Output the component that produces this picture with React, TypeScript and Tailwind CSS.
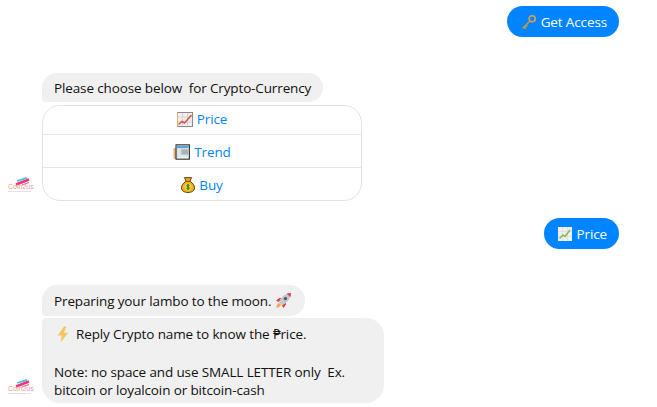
const font = "font-['Open_Sans','Noto_Sans',sans-serif]";

function KeyIcon() {
  return (
    <svg width="16" height="16" viewBox="0 0 16 16" className="shrink-0" fill="none">
      <circle cx="11.2" cy="4.800" r="3" stroke="#dca14a" strokeWidth="1.600" />
      <path d="M9 7 1.800 14.200M3 13l1.800 1.600M4.800 11.200l1.500 1.400" stroke="#d4983f" strokeWidth="1.500" />
    </svg>
  );
}

function ChartIcon() {
  return (
    <svg width="16" height="15" viewBox="0 0 16 15" className="shrink-0">
      <rect x="0.5" y="0.5" width="15" height="14" fill="#f1efef" stroke="#8c8888" />
      <path d="M5.500 1v13M10.500 1v13M1 5h14M1 10h14" stroke="#d4d2d2" strokeWidth="1" />
      <path d="M1.500 12.500 5 9.500l2.500 1.500 7-8" stroke="#e0523f" strokeWidth="1.500" fill="none" />
      <path d="M0.500 0.500v14" stroke="#e8b06a" />
    </svg>
  );
}

function GreenChartIcon() {
  return (
    <svg width="14" height="14" viewBox="0 0 14 14" className="shrink-0">
      <rect width="14" height="14" fill="#eef1f2" />
      <path d="M4.500 0v14M9.500 0v14M0 4.500h14M0 9.500h14" stroke="#dfe3e5" strokeWidth="1" />
      <path d="M1.500 11.500 5 8l2 1.500 5-6.500" stroke="#86b85a" strokeWidth="1.500" fill="none" />
    </svg>
  );
}

function NewsIcon() {
  return (
    <svg width="17" height="16" viewBox="0 0 17 16" className="shrink-0">
      <path d="M3 1h13.500v14H2A1.500 1.500 0 0 1 .5 13.500V4H3z" fill="#e9b36d" />
      <rect x="3" y="0.800" width="13.400" height="14.400" fill="#cfd6da" stroke="#26292c" strokeWidth="1" />
      <rect x="4" y="2" width="11.500" height="2" fill="#58a6dc" />
      <rect x="8.500" y="5.500" width="6.500" height="5" fill="#aab2b7" />
      <path d="M4.500 6h3M4.500 8h3M4.500 10h3M4.500 12h10.500M4.500 13.600h10.500" stroke="#f4f6f7" strokeWidth="1" />
    </svg>
  );
}

function BagIcon() {
  return (
    <svg width="14" height="16" viewBox="0 0 14 16" className="shrink-0">
      <path d="M3.500.7h7L9 4l.6.8C12 6.400 13.500 8.500 13.500 10.800c0 3-2.800 4.700-6.500 4.700S.5 13.800.5 10.800c0-2.300 1.500-4.400 3.900-6L5 4z" fill="#edb21d" stroke="#5a3a08" strokeWidth="1" />
      <path d="M4.500 4.300h5" stroke="#c2410c" strokeWidth="1.300" />
      <circle cx="7" cy="10" r="3.500" fill="#f6cf3d" />
      <path d="M8.500 8.400C7.500 7.700 5.800 8 5.800 9c0 1.300 2.700.8 2.700 2 0 1-1.800 1.200-3 .5M7 7v6" stroke="#187a2f" strokeWidth="1" fill="none" />
    </svg>
  );
}

function RocketIcon() {
  return (
    <svg width="17" height="17" viewBox="0 0 16 16" className="shrink-0">
      <path d="M4.500 5.500 1 8l2.500 1.500L6 6z" fill="#d9434e" />
      <path d="M10.500 11.500 8 15l-1.500-2.500L10 10z" fill="#d9434e" />
      <path d="M3.800 9.800C5.500 4.800 9.500 1.200 15 1c-.2 5.500-3.800 9.500-8.800 11.200z" fill="#c3c7cc" />
      <path d="M11 1.500 15 1c0 1.400-.2 2.700-.6 3.900z" fill="#d9434e" />
      <circle cx="9.800" cy="6.200" r="1.600" fill="#4d5761" />
      <path d="M3.800 10.300C2.300 11 1.400 12.800 1.200 14.800c2-.2 3.800-1.100 4.500-2.600z" fill="#f2a65a" />
    </svg>
  );
}

function BoltIcon() {
  return (
    <svg width="12" height="17" viewBox="0 0 12 17" className="ml-[3px] shrink-0">
      <path d="M7 .5.800 9.500h4L3.500 16.500 11.300 6.800H6.800L9.500.5z" fill="#f6c55f" />
    </svg>
  );
}

function Logo() {
  return (
    <div className="relative w-[26px] h-[15px] shrink-0">
      <svg width="26" height="10" viewBox="0 0 26 10" className="absolute left-0 top-0">
        <path d="M9 4 19 0.800" stroke="#45c1d6" strokeWidth="1.800" />
        <path d="M8 7.500 21 2.500" stroke="#f0337e" strokeWidth="2.500" />
        <path d="M14 8 21 5.500" stroke="#f26a3d" strokeWidth="1.200" />
      </svg>
      <span className="absolute left-0 top-[6px] text-[7px] leading-[8px] tracking-normal whitespace-nowrap font-['Liberation_Sans',sans-serif] text-[#f78fc4]">
        <span className="text-[#f5a07a]">Coin</span>2us
      </span>
      <div className="absolute left-0 top-[14px] w-[23px] h-px bg-[#e2e2e2]" />
    </div>
  );
}

function ButtonRow({ icon, label, className, divider }: { icon: React.ReactNode; label: string; className: string; divider: boolean }) {
  return (
    <div className={`flex items-center justify-center gap-[4px] text-[#0084ff] ${className} ${divider ? "border-t border-[#e6e6e6]" : ""}`}>
      {icon}
      <span>{label}</span>
    </div>
  );
}

function Outgoing({ icon, label, className }: { icon: React.ReactNode; label: string; className: string }) {
  return (
    <div className="flex justify-end pr-[38px]">
      <div className={`flex items-center h-[31px] rounded-full bg-[#0084ff] text-white ${className}`}>
        {icon}
        <span>{label}</span>
      </div>
    </div>
  );
}

export default function App() {
  return (
    <div className={`w-[657px] h-[407px] overflow-hidden bg-white pt-[6px] text-[13.5px] leading-[18px] tracking-[-0.13px] text-[#111] ${font}`}>
      <Outgoing icon={<KeyIcon />} label="Get Access" className="pl-[14px] pr-[12px] gap-[4px]" />

      <div className="mt-[36px] flex items-end gap-[8px] pl-[8px]">
        <div className="mb-[9px]">
          <Logo />
        </div>
        <div className="flex flex-col items-start">
          <div className="h-[29px] flex items-center px-[12px] bg-[#f0f0f0] rounded-t-[15px] rounded-br-[15px] rounded-bl-[4px] whitespace-pre">
            Please choose below  for Crypto-Currency
          </div>
          <div className="mt-[3px] w-[320px] border border-[#e3e3e3] rounded-[18px] overflow-hidden">
            <ButtonRow icon={<ChartIcon />} label="Price" className="h-[28px] pb-[2px]" divider={false} />
            <ButtonRow icon={<NewsIcon />} label="Trend" className="h-[33px] pt-[2px]" divider />
            <ButtonRow icon={<BagIcon />} label="Buy" className="h-[33px] pt-[2px]" divider />
          </div>
        </div>
      </div>

      <div className="mt-[17px]">
        <Outgoing icon={<GreenChartIcon />} label="Price" className="pl-[14px] pr-[12px] gap-[5px]" />
      </div>

      <div className="mt-[36px] flex items-end gap-[8px] pl-[8px]">
        <div className="mb-[9px]">
          <Logo />
        </div>
        <div className="flex flex-col items-start">
          <div className="h-[31px] flex items-center gap-[4px] pl-[12px] pr-[13px] bg-[#f0f0f0] rounded-t-[15px] rounded-br-[15px] rounded-bl-[4px] whitespace-pre">
            <span>Preparing your lambo to the moon.</span>
            <RocketIcon />
          </div>
          <div className="mt-[2px] w-[342px] h-[85px] px-[12px] pt-[7px] bg-[#f0f0f0] rounded-[18px] rounded-tl-[4px] whitespace-pre">
            <div className="flex items-center gap-[7px] h-[18px]">
              <BoltIcon />
              <span>Reply Crypto name to know the ₱rice.</span>
            </div>
            <div className="mt-[20px]">Note: no space and use SMALL LETTER only  Ex.</div>
            <div>bitcoin or loyalcoin or bitcoin-cash</div>
          </div>
        </div>
      </div>
    </div>
  );
}
